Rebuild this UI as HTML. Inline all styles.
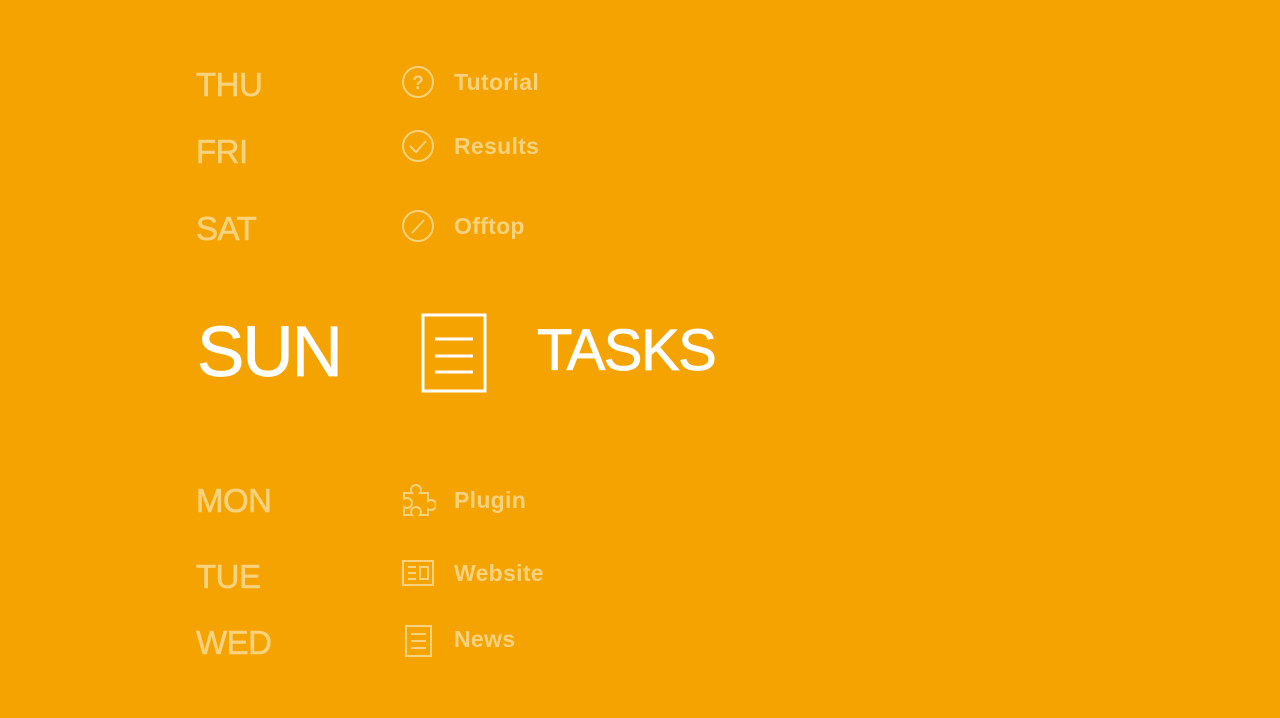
<!DOCTYPE html><html><head><style>
body{margin:0;width:1280px;height:718px;background:#F4A300;position:relative;overflow:hidden;font-family:"Liberation Sans",sans-serif;}
.d,.l,.b{position:absolute;line-height:1;white-space:nowrap}
.d{color:#F8D27E;font-size:33px;left:196px;-webkit-text-stroke:0.6px #F8D27E;letter-spacing:-0.5px}
.l{color:#F8D27E;font-size:23px;left:454px;font-weight:bold;letter-spacing:0.3px}
.b{color:#fff;-webkit-text-stroke:0.8px #fff}
svg{position:absolute;fill:none;stroke:#F8D27E;stroke-width:2}
</style></head><body>
<div class="d" style="top:68px">THU</div>
<div class="d" style="top:135px">FRI</div>
<div class="d" style="top:212px">SAT</div>
<div class="d" style="top:484px">MON</div>
<div class="d" style="top:560px">TUE</div>
<div class="d" style="top:626px">WED</div>
<div class="b" style="left:197px;top:317px;font-size:71px;letter-spacing:-2px">SUN</div>
<div class="b" style="left:537px;top:322px;font-size:58px;letter-spacing:-1.5px">TASKS</div>
<div class="l" style="top:71px">Tutorial</div>
<div class="l" style="top:135px">Results</div>
<div class="l" style="top:215px">Offtop</div>
<div class="l" style="top:489px">Plugin</div>
<div class="l" style="top:562px">Website</div>
<div class="l" style="top:628px">News</div>
<svg style="left:400px;top:64px" width="36" height="36"><circle cx="18" cy="18" r="15"/><text x="18" y="25" font-size="19" font-weight="bold" text-anchor="middle" fill="#F8D27E" stroke="none" font-family="Liberation Sans">?</text></svg>
<svg style="left:400px;top:128px" width="36" height="36"><circle cx="18" cy="18" r="15"/><path d="M10 18l6 6 10-11"/></svg>
<svg style="left:400px;top:208px" width="36" height="36"><circle cx="18" cy="18" r="15"/><path d="M12 25l12-13"/></svg>
<svg style="left:400px;top:483px" width="36" height="36"><path d="M4 10h8a5 5 0 1 1 8 0h8v8a5 5 0 1 1 0 8v6H20a5 5 0 1 0-8 0H4v-8a5 5 0 1 0 0-8z"/></svg>
<svg style="left:400px;top:558px" width="36" height="30"><rect x="3" y="3" width="30" height="24"/><path d="M8 9h8M8 15h8M8 21h8M20 9h8v12h-8z"/></svg>
<svg style="left:400px;top:623px" width="36" height="36"><rect x="6" y="3" width="25" height="30"/><path d="M11 11h15M11 18h15M11 25h15"/></svg>
<svg style="left:420px;top:312px;stroke:#fff;stroke-width:3" width="70" height="82"><rect x="3" y="3" width="62" height="76"/><path d="M15 27h38M15 44h38M15 60h38"/></svg>
</body></html>
